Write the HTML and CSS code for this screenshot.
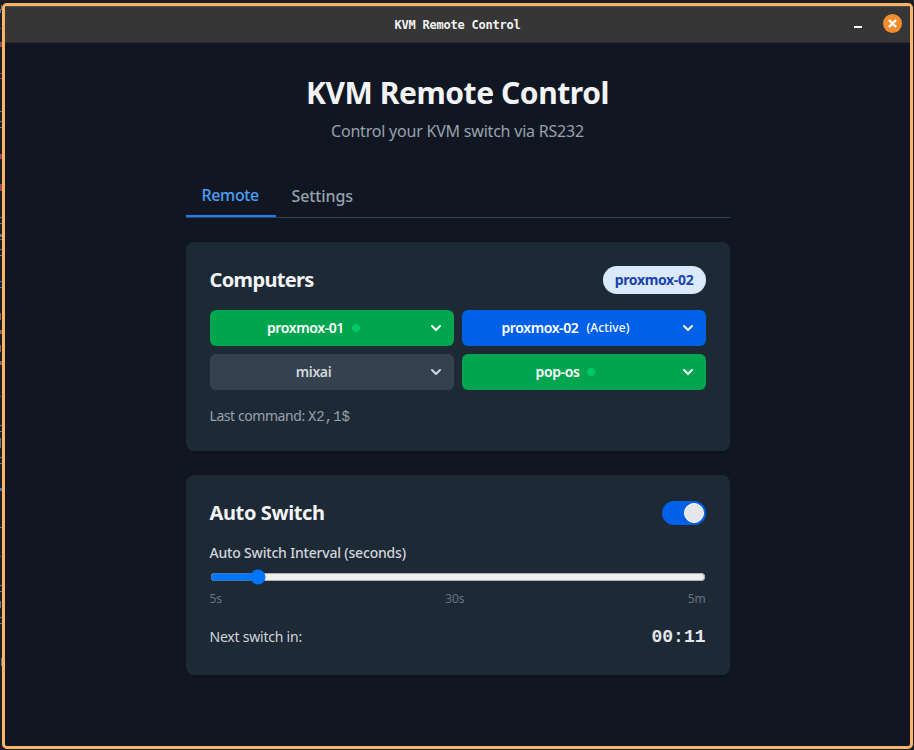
FILE: index.html
```html
<!DOCTYPE html>
<html lang="en">
<head>
<meta charset="utf-8">
<title>KVM Remote Control</title>
<link rel="stylesheet" href="styles.css">
</head>
<body>
<svg class="backdrop" width="2" height="750" viewBox="0 0 2 750" shape-rendering="crispEdges">
  <g fill="#70757c">
    <path d="M0 9h1v4h-1zM1 5h1v5h-1zM0 111h2v1h-2zM0 121h2v1h-2zM0 127h2v1h-2zM0 217h2v1h-2zM0 223h2v1h-2zM0 234h2v3h-2zM0 239h2v1h-2zM0 249h2v1h-2zM0 255h2v1h-2zM0 425h2v1h-2zM0 431h2v1h-2zM0 438h1v10h-1zM0 457h2v1h-2zM0 463h2v1h-2zM0 527h2v1h-2zM0 585h2v1h-2zM0 591h2v1h-2zM0 601h1v7h-1zM0 617h2v1h-2zM0 623h2v1h-2zM1 658h1v8h-1z"/>
  </g>
  <path fill="#9c4650" d="M0 28h1v1h-1zM0 42h2v5h-2zM0 73h2v1h-2zM0 78h2v1h-2zM0 154h2v5h-2zM0 184h2v7h-2zM0 396h1v1h-1zM0 556h1v1h-1z"/>
  <path fill="#9a6040" d="M0 313h1v7h-1zM0 330h2v4h-2zM0 345h1v7h-1zM0 361h2v4h-2z"/>
  <path fill="#3c7ba8" d="M0 281h2v1h-2zM0 287h2v1h-2zM0 488h2v3h-2z"/>
</svg>
<div class="window">
  <header class="titlebar">
    <span class="titlebar-text">KVM Remote Control</span>
    <div class="window-buttons">
      <span class="minimize"></span>
      <span class="close"><svg width="9" height="9" viewBox="0 0 9 9"><path d="M1 1l7 7M8 1l-7 7"/></svg></span>
    </div>
  </header>
  <main class="content">
    <h1>KVM Remote Control</h1>
    <p class="subtitle">Control your KVM switch via RS232</p>

    <nav class="tabs">
      <span class="tab tab-active">Remote</span>
      <span class="tab">Settings</span>
    </nav>

    <section class="card">
      <div class="card-head">
        <h2 class="computers-title">Computers</h2>
        <span class="badge">proxmox-02</span>
      </div>
      <div class="grid">
        <div class="pc online">
          <span class="pc-main"><span>proxmox-01</span><i class="dot"></i></span>
          <svg class="chevron" viewBox="0 0 20 20"><path d="M5.293 7.293a1 1 0 011.414 0L10 10.586l3.293-3.293a1 1 0 111.414 1.414l-4 4a1 1 0 01-1.414 0l-4-4a1 1 0 010-1.414z"/></svg>
        </div>
        <div class="pc active">
          <span class="pc-main"><span>proxmox-02</span><small>(Active)</small></span>
          <svg class="chevron" viewBox="0 0 20 20"><path d="M5.293 7.293a1 1 0 011.414 0L10 10.586l3.293-3.293a1 1 0 111.414 1.414l-4 4a1 1 0 01-1.414 0l-4-4a1 1 0 010-1.414z"/></svg>
        </div>
        <div class="pc">
          <span class="pc-main"><span>mixai</span></span>
          <svg class="chevron" viewBox="0 0 20 20"><path d="M5.293 7.293a1 1 0 011.414 0L10 10.586l3.293-3.293a1 1 0 111.414 1.414l-4 4a1 1 0 01-1.414 0l-4-4a1 1 0 010-1.414z"/></svg>
        </div>
        <div class="pc online">
          <span class="pc-main"><span>pop-os</span><i class="dot"></i></span>
          <svg class="chevron" viewBox="0 0 20 20"><path d="M5.293 7.293a1 1 0 011.414 0L10 10.586l3.293-3.293a1 1 0 111.414 1.414l-4 4a1 1 0 01-1.414 0l-4-4a1 1 0 010-1.414z"/></svg>
        </div>
      </div>
      <p class="last">Last command: <code>X2,1$</code></p>
    </section>

    <section class="card">
      <div class="card-head">
        <h2 class="auto-title">Auto Switch</h2>
        <span class="toggle"><i class="knob"></i></span>
      </div>
      <label class="label" for="interval">Auto Switch Interval (seconds)</label>
      <input id="interval" class="range" type="range" min="5" max="300" value="30">
      <div class="ticks"><span>5s</span><span>30s</span><span>5m</span></div>
      <div class="next"><span>Next switch in:</span><span class="time">00:11</span></div>
    </section>
  </main>
</div>
</body>
</html>
```
FILE: styles.css
```css
* { box-sizing: border-box; margin: 0; padding: 0; }

body {
  height: 750px;
  padding: 3px 1px 1px 2px;
  overflow: hidden;
  background: #1b1e24;
  font-family: "Noto Sans", sans-serif;
}

.backdrop { position: absolute; left: 0; top: 0; }

.window {
  height: 746px;
  border: 3px solid #ffb366;
  border-radius: 5px;
  background: #101723;
  overflow: hidden;
}

.titlebar {
  display: flex;
  align-items: center;
  justify-content: center;
  position: relative;
  height: 37px;
  border-top: 1px solid #505050;
  border-bottom: 1px solid #282828;
  background: #363636;
}

.titlebar-text {
  font: bold 12px/16px "DejaVu Sans Mono", monospace;
  letter-spacing: -0.22px;
  color: #f2f2f2;
}

.window-buttons {
  position: absolute;
  right: 8px;
  top: 7px;
  display: flex;
  align-items: center;
  gap: 21px;
}

.minimize { width: 8px; height: 2px; margin-top: 6px; background: #fff; }

.close {
  display: flex;
  align-items: center;
  justify-content: center;
  width: 19px;
  height: 19px;
  border-radius: 50%;
  background: #f18d2c;
}

.close path { stroke: #fff; stroke-width: 2.4; }

.content { width: 544px; margin: 0 auto; padding-top: 32px; }

h1 {
  font-size: 30px;
  line-height: 36px;
  letter-spacing: -0.43px;
  text-align: center;
  color: #f3f4f6;
}

.subtitle {
  margin-top: 8px;
  font-size: 16px;
  line-height: 24px;
  letter-spacing: -0.21px;
  text-align: center;
  color: #99a1ad;
}

.tabs {
  display: flex;
  align-items: stretch;
  margin-top: 32px;
  border-bottom: 1px solid #36414f;
}

.tab {
  display: flex;
  align-items: center;
  height: 42px;
  padding: 0 16px;
  font-size: 16px;
  font-weight: 550;
  letter-spacing: -0.1px;
  color: #99a1ad;
}

.tab-active {
  width: 90px;
  border-bottom: 2px solid #1b7ff5;
  letter-spacing: -0.35px;
  color: #4c9ff5;
}

.card {
  margin-top: 24px;
  padding: 24px;
  border-radius: 8px;
  background: #1e2936;
  box-shadow: 0 1px 3px rgba(0, 0, 0, .1), 0 1px 2px -1px rgba(0, 0, 0, .1);
}

.card-head {
  display: flex;
  align-items: center;
  justify-content: space-between;
  height: 28px;
  margin-bottom: 16px;
}

h2 { font-size: 20px; line-height: 28px; font-weight: 700; color: #f3f4f6; }
.computers-title { letter-spacing: -0.65px; }
.auto-title { letter-spacing: -0.38px; }

.badge {
  width: 103px;
  border-radius: 14px;
  background: #dbeafb;
  font-size: 14px;
  line-height: 28px;
  font-weight: 700;
  letter-spacing: -0.34px;
  text-align: center;
  color: #1a43ae;
}

.grid { display: grid; grid-template-columns: 1fr 1fr; gap: 8px; }

.pc {
  display: flex;
  align-items: center;
  height: 36px;
  padding-right: 8px;
  border-radius: 6px;
  background: #36414f;
  font-size: 14px;
  line-height: 20px;
  font-weight: 600;
  letter-spacing: -0.39px;
  color: #d1d5db;
}

.online { background: #00a550; color: #fff; }
.active { background: #0060e8; color: #fff; }

.pc-main {
  flex: 1;
  display: flex;
  align-items: center;
  justify-content: center;
  gap: 8px;
  padding-right: 8px;
}

.pc small { font-size: 12px; line-height: 16px; font-weight: 500; letter-spacing: .1px; }
.dot { width: 8px; height: 8px; border-radius: 50%; background: #00c864; }
.chevron { width: 20px; height: 20px; fill: currentColor; }

.last {
  height: 21px;
  margin-top: 16px;
  font-size: 14px;
  line-height: 20px;
  letter-spacing: -0.43px;
  color: #99a1ad;
}

.last code { font: 14px/20px "Liberation Mono", monospace; letter-spacing: 0; }

.toggle {
  display: flex;
  justify-content: flex-end;
  width: 44px;
  height: 24px;
  padding: 2px;
  border-radius: 12px;
  background: #0060e8;
}

.knob {
  width: 20px;
  height: 20px;
  border: 1px solid #fff;
  border-radius: 50%;
  background: #e5e7eb;
}

.label {
  display: block;
  font-size: 14px;
  line-height: 20px;
  font-weight: 500;
  letter-spacing: -0.19px;
  color: #d1d5db;
}

.range { display: block; width: 496px; height: 16px; margin: 6px 0; }

.ticks {
  display: flex;
  justify-content: space-between;
  font-size: 12px;
  line-height: 16px;
  letter-spacing: -0.2px;
  color: #6a7280;
}

.next {
  display: flex;
  align-items: center;
  justify-content: space-between;
  margin-top: 16px;
  font-size: 14px;
  line-height: 28px;
  letter-spacing: -0.22px;
  color: #d1d5db;
}

.time {
  font: bold 18px/28px "Liberation Mono", monospace;
  letter-spacing: 0;
  color: #e5e7eb;
}
```
